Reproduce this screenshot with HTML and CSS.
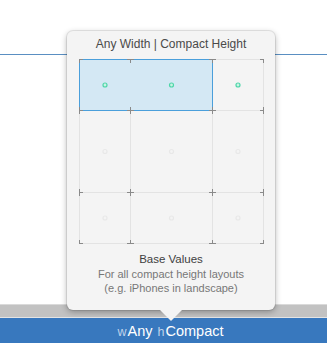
FILE: index.html
```html
<!DOCTYPE html>
<html lang="en">
<head>
  <meta charset="UTF-8" />
  <title>Size Classes</title>
  <link rel="stylesheet" href="styles.css">
</head>
<body>
  <div class="canvas">
    <div class="guide"></div>
  </div>
  <div class="band"></div>
  <div class="bar">
    <span class="axis">w</span><span class="val">Any</span>
    <span class="axis">h</span><span class="val">Compact</span>
  </div>

  <div class="popover">
    <div class="title">Any Width | Compact Height</div>
    <svg class="grid" width="185" height="185" viewBox="0 0 185 185">
      <!-- cell lines -->
      <g stroke="#e3e3e3" stroke-width="1" fill="none">
        <path d="M0.5 0.5V184.5M51.5 0.5V184.5M133.5 0.5V184.5M184.5 0.5V184.5" />
        <path d="M0.5 0.5H184.5M0.5 51.5H184.5M0.5 133.5H184.5M0.5 184.5H184.5" />
      </g>
      <!-- selection -->
      <rect x="0.5" y="0.5" width="133" height="51" fill="#d4e8f4" stroke="#4a9fdb" />
      <!-- ticks -->
      <g stroke="#8a8a8a" stroke-width="1" fill="none">
        <path d="M0.5 0V4M0 0.5H4" />
        <path d="M51.5 0V4M48 0.5H55" />
        <path d="M133.5 0V4M130 0.5H137" />
        <path d="M184.5 0V4M181 0.5H185" />

        <path d="M0.5 48V55M0 51.5H4" />
        <path d="M51.5 48V55M48 51.5H55" />
        <path d="M133.5 48V55M130 51.5H137" />
        <path d="M184.5 48V55M181 51.5H185" />

        <path d="M0.5 130V137M0 133.5H4" />
        <path d="M51.5 130V137M48 133.5H55" />
        <path d="M133.5 130V137M130 133.5H137" />
        <path d="M184.5 130V137M181 133.5H185" />

        <path d="M0.5 181V185M0 184.5H4" />
        <path d="M51.5 181V185M48 184.5H55" />
        <path d="M133.5 181V185M130 184.5H137" />
        <path d="M184.5 181V185M181 184.5H185" />
      </g>
      <!-- anchors -->
      <g fill="#c9f3e3" stroke="#4fd6aa" stroke-width="1.2">
        <circle cx="26" cy="26" r="2" />
        <circle cx="92.5" cy="26" r="2" />
        <circle cx="159" cy="26" r="2" />
      </g>
      <g fill="none" stroke="#e8e8e8" stroke-width="1.2">
        <circle cx="26" cy="92.5" r="2" />
        <circle cx="92.5" cy="92.5" r="2" />
        <circle cx="159" cy="92.5" r="2" />
        <circle cx="26" cy="159" r="2" />
        <circle cx="92.5" cy="159" r="2" />
        <circle cx="159" cy="159" r="2" />
      </g>
    </svg>
    <div class="info">
      <div class="info-title">Base Values</div>
      <div class="info-text">For all compact height layouts<br>(e.g. iPhones in landscape)</div>
    </div>
  </div>
</body>
</html>
```

FILE: styles.css
```css
body {
  margin: 0;
  width: 327px;
  height: 343px;
  overflow: hidden;
  background: #fff;
  font-family: "Liberation Sans", Arial, sans-serif;
  position: relative;
}

.canvas {
  height: 304px;
  background: #fff;
}

.guide {
  height: 54px;
  border-bottom: 1px solid #5a8fc2;
}

.band {
  height: 12px;
  background: #c2c2c2;
  border-top: 1px solid #dadada;
  border-bottom: 1px solid #e4e4e4;
}

.bar {
  height: 25px;
  padding-left: 15px;
  background: #3878be;
  color: #fff;
  text-align: center;
  line-height: 27px;
  font-size: 14.5px;
}

.bar .axis {
  font-size: 12.5px;
  color: #bfd2ea;
  margin-right: 1px;
}

.bar .val {
  margin-right: 1px;
}

.popover {
  position: absolute;
  left: 67px;
  top: 31px;
  width: 208px;
  height: 279px;
  background: #f4f4f4;
  border-radius: 6px;
  box-shadow: 0 0 0 1px rgba(0, 0, 0, 0.08), 0 2px 6px rgba(0, 0, 0, 0.3);
}

.popover::after {
  content: "";
  position: absolute;
  left: 93px;
  bottom: -11px;
  width: 22px;
  height: 11px;
  background: #f4f4f4;
  clip-path: polygon(0 0, 100% 0, 50% 100%);
}

.title {
  margin-top: 6px;
  height: 14px;
  line-height: 14px;
  text-align: center;
  font-size: 12px;
  color: #4a4a4a;
}

.grid {
  display: block;
  margin: 8px 0 0 12px;
}

.info {
  margin-top: 8px;
  text-align: center;
  line-height: 14px;
  font-size: 11px;
}

.info-title {
  font-size: 11.5px;
  color: #404040;
}

.info-text {
  margin-top: 1px;
  color: #777;
}
```
